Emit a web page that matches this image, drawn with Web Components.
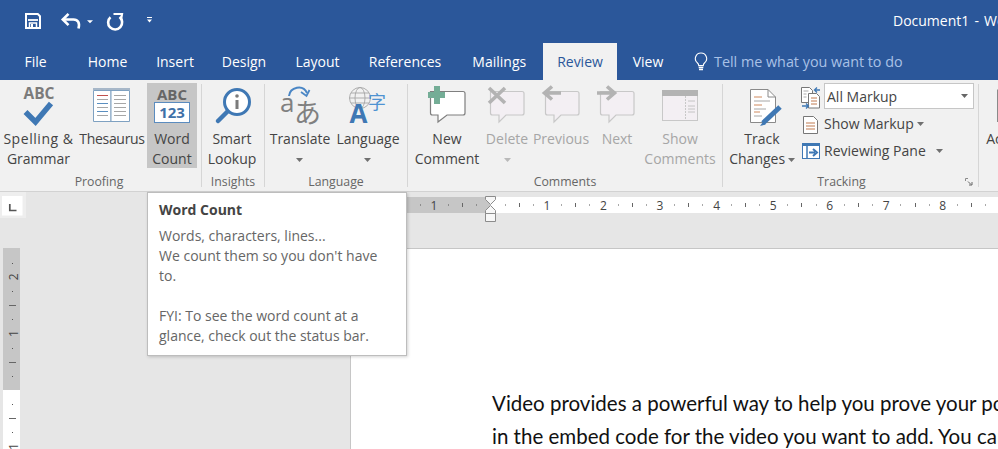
<!DOCTYPE html>
<html lang="en"><head><meta charset="utf-8"><title>Word Review</title>
<style>
html,body{margin:0;padding:0;width:998px;height:449px;overflow:hidden;background:#e6e6e6}
body{font-family:"Open Sans","Noto Sans",sans-serif;font-size:14px;color:#444}
svg{display:block;overflow:visible}
</style></head><body>
<w-app>
  <w-titlebar title-text="Document1 - Word">
    <svg slot="qat" width="18" height="43" viewBox="24 0 18 43" style="margin-left:24px"><path d="M26 14h11.800l2.200 2.200V28H26z" fill="none" stroke="#fff" stroke-width="2"/><path d="M28 20h10" stroke="#fff" stroke-width="1.800"/><path d="M29.500 28v-5h7v5" fill="none" stroke="#fff" stroke-width="1.500"/><rect x="31" y="24" width="2" height="3" fill="#fff"/></svg>
    <svg slot="qat" width="20" height="43" viewBox="61 0 20 43" style="margin-left:19px"><path d="M63 19.500H73.500C78 19.500 80 23 78.500 28.500" fill="none" stroke="#fff" stroke-width="2.600"/><path d="M68.500 13.800L62.800 19.500L68.500 25.200" fill="none" stroke="#fff" stroke-width="2.600"/></svg>
    <svg slot="qat" width="8" height="43" viewBox="86 0 8 43" style="margin-left:5px"><path d="M87 20.300h6l-3 3z" fill="#fff"/></svg>
    <svg slot="qat" width="19" height="43" viewBox="105 0 19 43" style="margin-left:11px"><path d="M110.500 17.200A7 7 0 1 0 119.500 17" fill="none" stroke="#fff" stroke-width="2.600"/><path d="M113.500 14H122L121 20" fill="none" stroke="#fff" stroke-width="2.200"/></svg>
    <svg slot="qat" width="8" height="43" viewBox="146 0 8 43" style="margin-left:22px"><path d="M147 17h5v1h-5zM147 19.500h5l-2.500 3z" fill="#fff"/></svg>
  </w-titlebar>
  <w-tabs>
    <w-tab w="57" style="margin-right:8.5px">File</w-tab><w-tab w="70">Home</w-tab><w-tab w="65">Insert</w-tab><w-tab w="73">Design</w-tab><w-tab w="74">Layout</w-tab><w-tab w="101">References</w-tab><w-tab w="87.5">Mailings</w-tab><w-tab w="74" active>Review</w-tab><w-tab w="62">View</w-tab>
    <w-tellme>Tell me what you want to do</w-tellme>
  </w-tabs>
  <w-ribbon>
    <w-group label="Proofing" w="202" pad="3">
      <w-btn w="77"><svg slot="icon" width="77" height="46" viewBox="0 83 77 46"><text x="39" y="98.500" text-anchor="middle" font-family="Open Sans" font-weight="700" font-size="15.500" fill="#7b7b7b">ABC</text><path d="M25.500 112L35.500 122L51 103.500" fill="none" stroke="#3f78b4" stroke-width="5.500"/></svg><span style="letter-spacing:.55px">Spelling &amp;</span><br>Grammar</w-btn>
      <w-btn w="70"><svg slot="icon" width="70" height="46" viewBox="77 83 70 46"><path d="M93.500 90.500H111V121.500H93.500z" fill="#fff" stroke="#7fa1c1"/><path d="M111 90.500H129.500V121.500H111z" fill="#fff" stroke="#7fa1c1"/><path d="M93 89h18M111 89h19" stroke="#5e7f9f" stroke-width="1.200"/><path d="M97 95.500h11" stroke="#c0504d"/><path d="M97 99.500h11M97 107.500h11M97 115.500h11M114 95.500h12M114 99.500h12M114 103.500h12M114 107.500h12M114 111.500h12M114 115.500h12" stroke="#a6a6a6"/><path d="M97 103.500h11M97 111.500h11" stroke="#5b8fc0"/></svg><span style="letter-spacing:-.3px">Thesaurus</span></w-btn>
      <w-btn w="50" active><svg slot="icon" width="50" height="46" viewBox="147 83 50 46"><text x="172" y="99.500" text-anchor="middle" font-family="Open Sans" font-weight="700" font-size="15" fill="#666">ABC</text><rect x="154.500" y="102.500" width="35" height="20" fill="#fff" stroke="#5b8cbf"/><text x="172" y="118" text-anchor="middle" font-family="Open Sans" font-weight="700" font-size="15" fill="#3f71a8">123</text></svg>Word<br>Count</w-btn>
    </w-group>
    <w-group label="Insights" w="63">
      <w-btn w="60"><svg slot="icon" width="60" height="46" viewBox="202 83 60 46"><circle cx="237" cy="102" r="12.500" fill="#fff" stroke="#3f78b4" stroke-width="3"/><path d="M227 112L218 121" stroke="#3f78b4" stroke-width="4.500" stroke-linecap="round"/><rect x="235.500" y="100" width="3" height="9" fill="#7b7b7b"/><circle cx="237" cy="96" r="1.800" fill="#7b7b7b"/></svg>Smart<br>Lookup</w-btn>
    </w-group>
    <w-group label="Language" w="143">
      <w-btn w="70"><svg slot="icon" width="70" height="46" viewBox="265 83 70 46"><path d="M289 96C290 87 303 84 307 93" fill="none" stroke="#4a86c5" stroke-width="2"/><path d="M301 92l5.500 4l3-6" fill="none" stroke="#4a86c5" stroke-width="1.800"/><text x="280" y="112" font-family="Open Sans" font-size="26" fill="#808080">a</text><text x="294" y="123" font-family="Noto Sans CJK JP" font-size="27" fill="#808080">あ</text></svg>Translate<br><w-caret></w-caret></w-btn>
      <w-btn w="66"><svg slot="icon" width="66" height="46" viewBox="335 83 66 46"><g fill="none" stroke="#a6a6a6" stroke-width=".9"><circle cx="360" cy="98" r="10.500"/><ellipse cx="360" cy="98" rx="5" ry="10.500"/><path d="M349.500 98h21M351 93h18M351 103h18"/></g><text x="349.500" y="123" font-family="Open Sans" font-weight="700" font-size="26" fill="#3f78b4">A</text><text x="368" y="109" font-family="Noto Sans CJK SC" font-size="18" fill="#4f93d2">字</text></svg>Language<br><w-caret></w-caret></w-btn>
    </w-group>
    <w-group label="Comments" w="315">
      <w-btn w="78"><svg slot="icon" width="78" height="46" viewBox="408 83 78 46"><path d="M430.500 91.500H463a2 2 0 0 1 2 2V113a2 2 0 0 1-2 2H447l-9 7v-7h-5.500a2 2 0 0 1-2-2z" fill="#fff" stroke="#7f7f7f" stroke-width="1.200"/><path d="M434 86h6v6h5v6h-5v6h-6v-6h-6v-6h6z" fill="#74ad96"/></svg>New<br>Comment</w-btn>
      <w-btn w="42" disabled><svg slot="icon" width="42" height="46" viewBox="486 83 42 46"><path d="M490.500 91.500H522a2 2 0 0 1 2 2V113a2 2 0 0 1-2 2H506l-7 7v-7h-6.500a2 2 0 0 1-2-2z" fill="#f3eff3" stroke="#c8c8c8" stroke-width="1.200"/><path d="M489 88L505 103M505 88L489 103" stroke="#b3b3b3" stroke-width="3.600"/></svg>Delete<br><w-caret></w-caret></w-btn>
      <w-btn w="66" disabled><svg slot="icon" width="66" height="46" viewBox="528 83 66 46"><path d="M545.500 91.500H577a2 2 0 0 1 2 2V113a2 2 0 0 1-2 2H561l-7 7v-7h-6.500a2 2 0 0 1-2-2z" fill="#f3eff3" stroke="#c8c8c8" stroke-width="1.200"/><path d="M561 93H547M552 86.500L544.500 93L552 99.500" fill="none" stroke="#b3b3b3" stroke-width="3.600"/></svg>Previous</w-btn>
      <w-btn w="46" disabled><svg slot="icon" width="46" height="46" viewBox="594 83 46 46"><path d="M600.500 91.500H632a2 2 0 0 1 2 2V113a2 2 0 0 1-2 2H616l-7 7v-7h-6.500a2 2 0 0 1-2-2z" fill="#f3eff3" stroke="#c8c8c8" stroke-width="1.200"/><path d="M597 93H614M607 86.500L614.500 93L607 99.500" fill="none" stroke="#b3b3b3" stroke-width="3.600"/></svg>Next</w-btn>
      <w-btn w="80" disabled><svg slot="icon" width="80" height="46" viewBox="640 83 80 46"><rect x="662.500" y="90.500" width="35" height="30" fill="#f3eff3" stroke="#c8c8c8"/><rect x="662" y="90" width="36" height="6" fill="#b3b3b3"/><path d="M685.500 96v24" stroke="#c8c8c8" stroke-dasharray="2 1"/><path d="M688 101h7M688 106h7M688 109h7M688 112h7" stroke="#c4c4c4"/></svg>Show<br>Comments</w-btn>
    </w-group>
    <w-group label="Tracking" w="256" pad="18" launcher>
      <w-btn w="78"><svg slot="icon" width="78" height="46" viewBox="723 83 78 46"><path d="M750.500 89.500H768L775.500 97V122.500H750.500z" fill="#fff" stroke="#8a8a8a"/><path d="M768 89.500V97H775.500" fill="none" stroke="#8a8a8a"/><path d="M754 97h8M754 105h8M754 112h6" stroke="#d08a5f"/><path d="M754 101h16M754 109h12M754 116h8" stroke="#a6a6a6"/><path d="M780 107L763 123" stroke="#3f78b4" stroke-width="5"/><path d="M764 120.500L760 126L765.500 124.500z" fill="#3f78b4"/></svg>Track<br>Changes <w-caret inline></w-caret></w-btn>
      <w-smallcol>
        <w-small><svg slot="icon" width="21" height="24" viewBox="801 84 21 24"><path d="M801.500 86.500h8l3 3v12h-11z" fill="#fff" stroke="#777"/><path d="M808.500 92.500h8l3 3v11.500h-11z" fill="#fff" stroke="#777"/><path d="M811 97h6M811 100h6M811 103h6" stroke="#c07a50"/><path d="M803.500 90h5M803.500 93h3M803.500 96h3" stroke="#aaa"/><path d="M820 89h-5M817 86.500l-2.500 2.500l2.500 2.500M802 105h6M806 102.500l2.500 2.500l-2.500 2.500" fill="none" stroke="#3f78b4" stroke-width="1.300"/></svg><w-combo>All Markup</w-combo></w-small>
        <w-small><svg slot="icon" width="21" height="24" viewBox="801 111 21 24"><path d="M803.500 115.500h10l4 4v13h-14z" fill="#fff" stroke="#777"/><path d="M806 122h9M806 125h9M806 128h9" stroke="#c07a50"/></svg>Show Markup<w-caret inline style="margin-left:3px"></w-caret></w-small>
        <w-small><svg slot="icon" width="21" height="24" viewBox="801 138 21 24"><rect x="802.500" y="142.500" width="17" height="15" fill="#fff" stroke="#3f78b4"/><rect x="802" y="142" width="18" height="3" fill="#3f78b4"/><path d="M807 145v13" stroke="#3f78b4" stroke-width="1.500"/><path d="M809 151.500h6M813 148l4 3.500l-4 3.500" fill="none" stroke="#3f78b4" stroke-width="2"/></svg>Reviewing Pane<w-caret inline style="margin-left:10px"></w-caret></w-small>
      </w-smallcol>
    </w-group>
    <w-group label="" w="80" open>
      <w-btn w="58"><svg slot="icon" width="58" height="46" viewBox="979 83 58 46"><path d="M997.500 89.500V122" stroke="#8a8a8a" fill="none"/></svg>Accept</w-btn>
    </w-group>
  </w-ribbon>
  <w-workspace>
    <w-tabstop slot="corner"></w-tabstop>
    <w-hruler slot="ruler"></w-hruler>
    <w-vruler slot="gutter"></w-vruler>
    <w-page slot="page">Video provides a powerful way to help you prove your point.<br>in the embed code for the video you want to add. You can also type</w-page>
  </w-workspace>
  <w-tooltip heading="Word Count">Words, characters, lines...<br>We count them so you don't have<br>to.<br><br>FYI: To see the word count at a<br>glance, check out the status bar.</w-tooltip>
</w-app>
<script>
const UI='"Open Sans","Noto Sans",sans-serif';
function def(name,css,html,extra){
  customElements.define(name,class extends HTMLElement{
    constructor(){super();const r=this.attachShadow({mode:'open'});r.innerHTML='<style>'+css+'</style>'+html;}
    connectedCallback(){if(extra)extra.call(this,this.shadowRoot);}
  });
}
def('w-app',`:host{display:block;position:relative;width:998px;height:449px;overflow:hidden;font-family:${UI};font-size:14px;color:#444}`,'<slot></slot>');
def('w-titlebar',`:host{display:flex;height:43px;background:#2b579a;color:#fff;overflow:hidden}
 .q{display:flex;flex:0 0 893px}.t{line-height:41px;white-space:nowrap;word-spacing:1.500px}`,
 '<div class="q"><slot name="qat"></slot></div><div class="t"></div>',function(r){r.querySelector('.t').textContent=this.getAttribute('title-text')});
def('w-tabs',`:host{display:flex;height:37px;background:#2b579a;padding-left:7px}`,'<slot></slot>');
def('w-tab',`:host{display:block;flex:none;text-align:center;color:#fff;line-height:37px;white-space:nowrap}
 :host([active]){background:#f1f1f1;color:#2b579a}`,'<slot></slot>',function(){this.style.width=this.getAttribute('w')+'px';});
def('w-tellme',`:host{display:flex;align-items:center;gap:6px;color:#a9c1e6;margin-left:15px;white-space:nowrap;font-size:14.350px}`,
 `<svg width="14" height="19" viewBox="0 0 14 19" style="flex:none"><path d="M7 1a5.600 5.600 0 0 0-3.500 10c.8.7 1.200 1.500 1.200 2.600h4.600c0-1.100.4-1.900 1.200-2.600A5.600 5.600 0 0 0 7 1z" fill="none" stroke="#fff" stroke-width="1.100"/><path d="M4.700 15.500h4.600M5 17.500h4" stroke="#fff" stroke-width="1.400"/></svg><slot></slot>`);
def('w-ribbon',`:host{display:flex;height:107px;padding-top:4px;background:#f1f1f1;border-bottom:1px solid #d2d2d2;overflow:hidden}`,'<slot></slot>');
def('w-group',`:host{display:flex;flex-direction:column;flex:none;height:103px;box-sizing:border-box;border-right:1px solid #d6d6d6}
 :host([open]){border-right:0}
 .c{display:flex;height:85px;margin-top:-1px}
 .l{position:relative;text-align:center;font-size:12.300px;color:#666;line-height:18px;padding-top:5px}
 .k{position:absolute;right:5px;top:10px}`,
 `<div class="c"><slot></slot></div><div class="l"><span></span><svg class="k" width="8" height="8" viewBox="0 0 8 8" style="display:none"><path d="M.5 3V.5H3" fill="none" stroke="#8a8a8a"/><path d="M3 3.500l3 3M7 4v3H4" fill="none" stroke="#666"/></svg></div>`,
 function(r){this.style.width=this.getAttribute('w')+'px';r.querySelector('span').textContent=this.getAttribute('label');
  const p=this.getAttribute('pad');if(p)r.querySelector('.l').style.paddingRight=p+'px';
  if(this.hasAttribute('launcher'))r.querySelector('.k').style.display='block';});
def('w-btn',`:host{display:block;flex:none;height:85px;text-align:center;line-height:20px;white-space:nowrap;color:#444}
 :host([active]){background:#c6c6c6}
 :host([disabled]){color:#a6a6a6}
 .i{height:46px;display:flex;justify-content:center}
 .x{display:flex;flex-direction:column;align-items:center}`,
 '<div class="i"><slot name="icon"></slot></div><div class="x"><div><slot></slot></div></div>',function(){this.style.width=this.getAttribute('w')+'px';});
def('w-caret',`:host{display:inline-block;flex:none;width:7px;height:4px;vertical-align:middle}
 :host([inline]){vertical-align:2px;margin-left:-1px}
 svg{display:block}`,'<svg width="7" height="4" viewBox="0 0 7 4"><path d="M0 0h7L3.500 4z" fill="currentColor" opacity=".75"/></svg>');
def('w-smallcol',`:host{display:flex;flex-direction:column;flex:none;width:176px}`,'<slot></slot>');
def('w-small',`:host{display:flex;align-items:center;height:27px;white-space:nowrap}
 .i{flex:none;width:23px}`,'<div class="i"><slot name="icon"></slot></div><slot></slot>');
def('w-combo',`:host{display:flex;align-items:center;justify-content:space-between;box-sizing:border-box;width:150px;height:26px;background:#fff;border:1px solid #c6c6c6;padding:0 5px 0 2px;margin-top:-1px}`,
 '<slot></slot><svg width="7" height="4" viewBox="0 0 7 4"><path d="M0 0h7L3.500 4z" fill="#666"/></svg>');
def('w-workspace',`:host{display:grid;grid-template-columns:350px 648px;grid-template-rows:56px 201px;background:#e6e6e6}`,
 '<slot name="corner"></slot><slot name="ruler"></slot><slot name="gutter"></slot><slot name="page"></slot>');
def('w-tabstop',`:host{display:block}svg{display:block}`,
 `<svg width="26" height="26" viewBox="0 192 26 26"><rect x="0" y="192" width="26" height="26" fill="#eeeeee"/><rect x="2" y="196" width="20.500" height="19.500" fill="#fff"/><path d="M9.800 204v6.500H16.500" fill="none" stroke="#555" stroke-width="1.700"/></svg>`);
def('w-hruler',`:host{display:block}svg{display:block}`,'<svg width="648" height="56" viewBox="350 192 648 56"></svg>',function(r){
  const z=490.4,inch=56.55;let s=`<rect x="351" y="197" width="140" height="16" fill="#c6c6c6"/><rect x="490" y="197" width="508" height="16" fill="#fff"/>`;
  for(let n=-2;n<=9;n++){for(let q=0;q<4;q++){const x=z+(n+q/4)*inch;if(x<352||x>998)continue;
    if(q==0&&n!=0){s+=`<text x="${x}" y="209.500" text-anchor="middle" font-family="Open Sans" font-size="12" fill="#444">${Math.abs(n)}</text>`}
    else if(q==2){s+=`<rect x="${Math.round(x)}" y="203" width="1" height="4" fill="#666"/>`}
    else if(q!=0){s+=`<rect x="${Math.round(x)}" y="204.500" width="1" height="1" fill="#555"/>`}}}
  s+=`<path d="M485.500 196.500h10v3l-5 5l-5-5zM485.500 213.500v-3l5-5l5 5v3zM485.500 213.500h10v8h-10z" fill="#f7f7f7" stroke="#8c8c8c"/>`;
  r.querySelector('svg').innerHTML=s;});
def('w-vruler',`:host{display:block}svg{display:block}`,'<svg width="350" height="201" viewBox="0 248 350 201"></svg>',function(r){
  let s=`<rect x="3" y="248" width="17" height="142" fill="#c6c6c6"/><rect x="3" y="390" width="17" height="60" fill="#fff"/>`;
  const z=390,inch=56.55;
  for(let n=-1;n<=3;n++){for(let q=0;q<4;q++){const y=z-(n+q/4)*inch;if(y<250||y>449)continue;
    if(q==0&&n!=0){s+=`<text transform="translate(17.500 ${y}) rotate(-90)" text-anchor="middle" font-family="Open Sans" font-size="12" fill="#444">${Math.abs(n)}</text>`}
    else if(q==2){s+=`<rect x="9" y="${Math.round(y)}" width="7" height="1" fill="#666"/>`}
    else if(q!=0){s+=`<rect x="12" y="${Math.round(y)}" width="1" height="1" fill="#555"/>`}}}
  r.querySelector('svg').innerHTML=s;});
def('w-page',`:host{display:block;box-sizing:border-box;background:#fff;border-left:1px solid #c6c6c6;border-top:1px solid #c6c6c6;padding:138px 0 0 141px;overflow:hidden;white-space:nowrap;font-family:Lato,"Open Sans",sans-serif;font-size:20.500px;line-height:33px;color:#111}`,'<slot></slot>');
def('w-tooltip',`:host{position:absolute;left:147px;top:192px;box-sizing:border-box;width:260px;height:164px;background:#fff;border:1px solid #bdbdbd;box-shadow:1px 1px 3px rgba(0,0,0,.18);padding:7px 11px;white-space:nowrap;line-height:20px;color:#666}
 h4{margin:0 0 6px;font-size:14px;font-weight:700;color:#444;line-height:20px}`,'<h4></h4><slot></slot>',function(r){r.querySelector('h4').textContent=this.getAttribute('heading')});
</script>
</body></html>
